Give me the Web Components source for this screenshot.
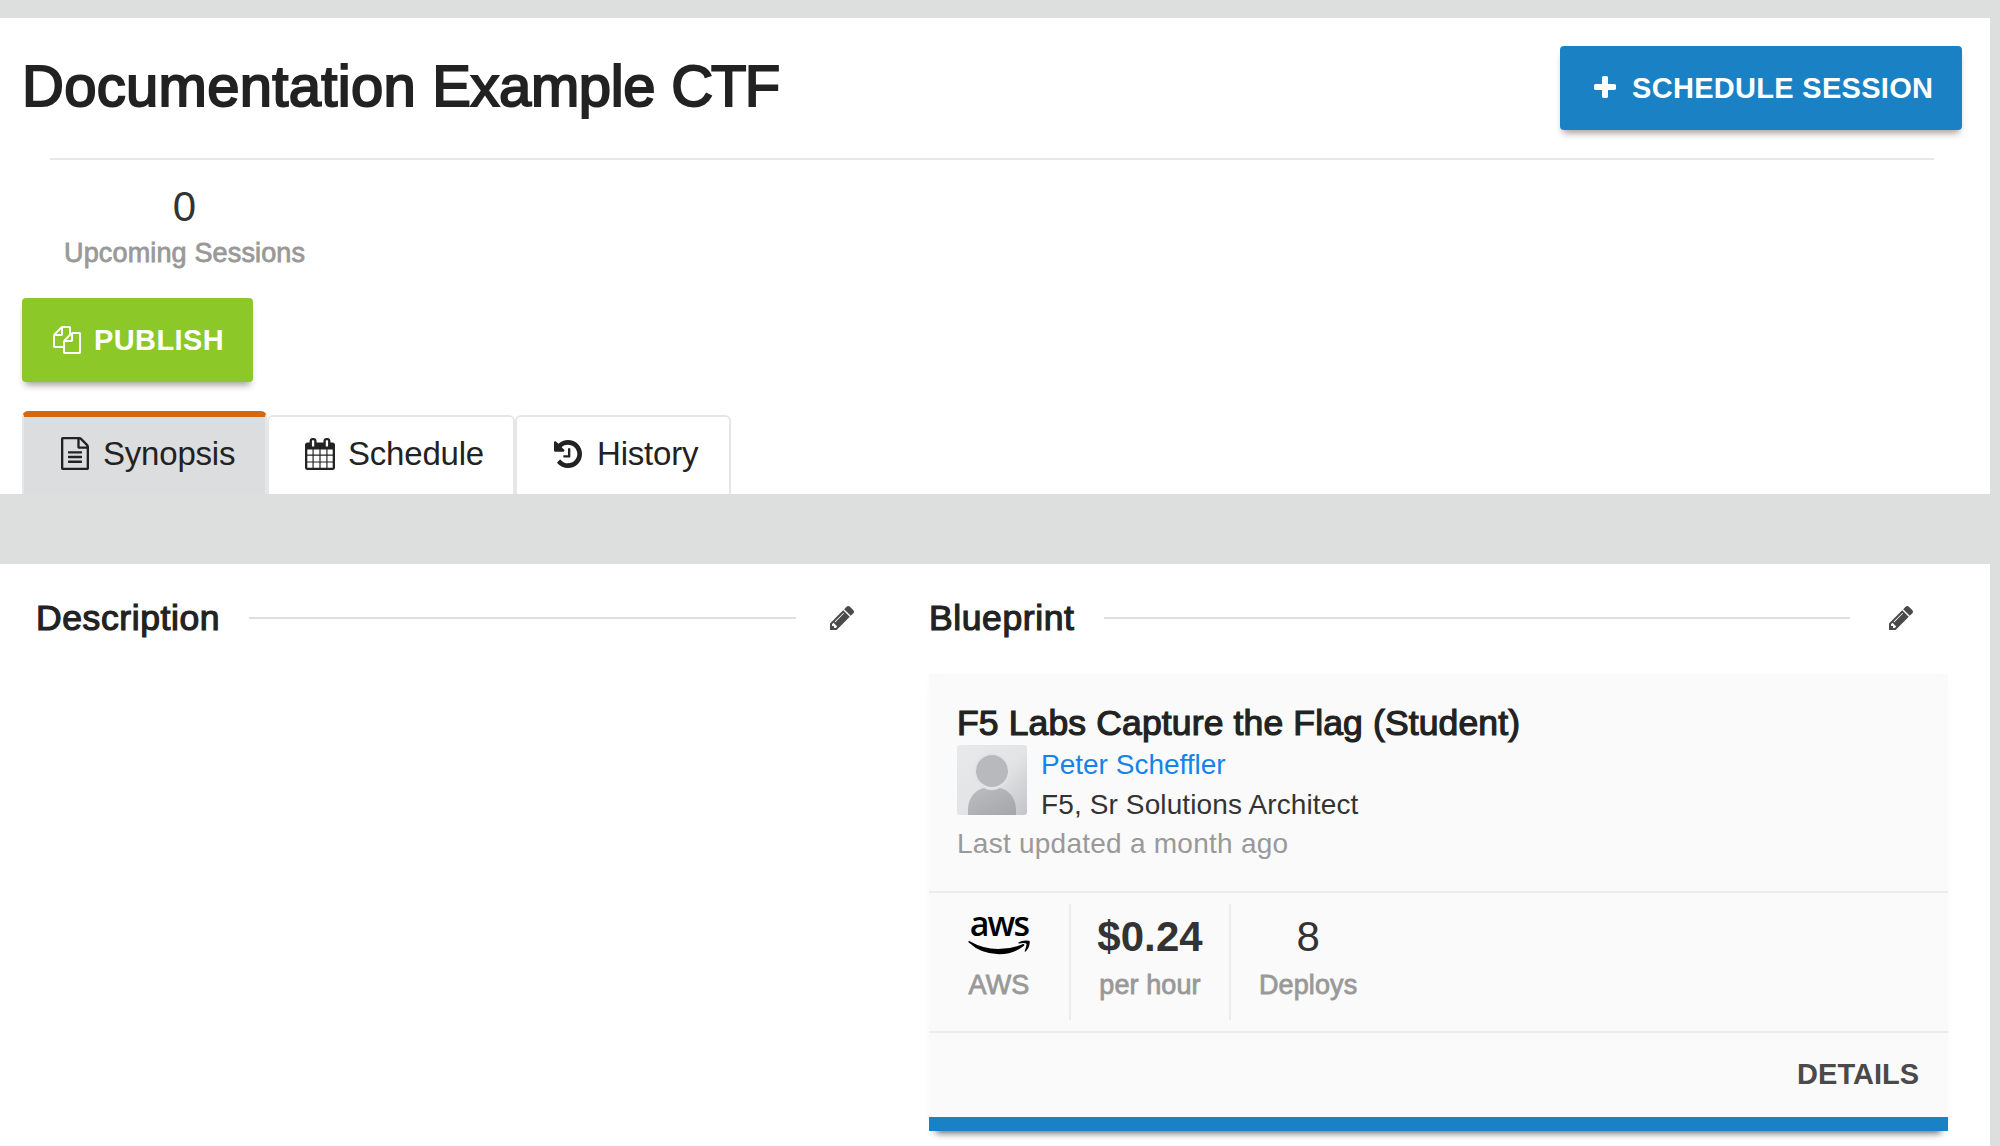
<!DOCTYPE html>
<html lang="en">
<head>
<meta charset="utf-8">
<title>Documentation Example CTF</title>
<style>
html,body{margin:0;height:100%}
body{font-family:"Liberation Sans",Arial,sans-serif;color:#222;background:#dddfde;overflow:hidden}
</style>
</head>
<body>
<event-page></event-page>
<script>
const ICONS = {
  plus: ['192 128 1408 1408', 'M1600 736v192q0 40-28 68t-68 28h-416v416q0 40-28 68t-68 28h-192q-40 0-68-28t-28-68v-416h-416q-40 0-68-28t-28-68v-192q0-40 28-68t68-28h416v-416q0-40 28-68t68-28h192q40 0 68 28t28 68v416h416q40 0 68 28t28 68z'],
  copy: ['0 0 1792 1792', 'M1696 384q40 0 68 28t28 68v1216q0 40-28 68t-68 28h-960q-40 0-68-28t-28-68v-288h-544q-40 0-68-28t-28-68v-672q0-40 20-88t48-76l408-408q28-28 76-48t88-20h416q40 0 68 28t28 68v328q68-40 128-40h416zm-544 213l-299 299h299v-299zm-640-384l-299 299h299v-299zm196 647l316-316v-416h-384v416q0 40-28 68t-68 28h-416v640h512v-256q0-40 20-88t48-76zm956 804v-1152h-384v416q0 40-28 68t-68 28h-416v640h896z'],
  file: ['128 0 1536 1792', 'M1596 380q28 28 48 76t20 88v1152q0 40-28 68t-68 28h-1344q-40 0-68-28t-28-68v-1600q0-40 28-68t68-28h896q40 0 88 20t76 48zm-444-244v376h376q-10-29-22-41l-313-313q-12-12-41-22zm384 1528v-1024h-416q-40 0-68-28t-28-68v-416h-768v1536h1280zm-1024-864q0-14 9-23t23-9h704q14 0 23 9t9 23v64q0 14-9 23t-23 9h-704q-14 0-23-9t-9-23v-64zm736 224q14 0 23 9t9 23v64q0 14-9 23t-23 9h-704q-14 0-23-9t-9-23v-64q0-14 9-23t23-9h704zm0 256q14 0 23 9t9 23v64q0 14-9 23t-23 9h-704q-14 0-23-9t-9-23v-64q0-14 9-23t23-9h704z'],
  calendar: ['64 0 1664 1792', 'M192 1664h288v-288h-288v288zm352 0h320v-288h-320v288zm-352-352h288v-320h-288v320zm352 0h320v-320h-320v320zm-352-384h288v-288h-288v288zm736 736h320v-288h-320v288zm-384-736h320v-288h-320v288zm768 736h288v-288h-288v288zm-384-352h320v-320h-320v320zm-352-864v-288q0-13-9.5-22.5t-22.5-9.5h-64q-13 0-22.5 9.5t-9.5 22.5v288q0 13 9.5 22.5t22.5 9.5h64q13 0 22.5-9.5t9.5-22.5zm736 864h288v-320h-288v320zm-384-384h320v-288h-320v288zm384 0h288v-288h-288v288zm32-480v-288q0-13-9.5-22.5t-22.5-9.5h-64q-13 0-22.5 9.5t-9.5 22.5v288q0 13 9.5 22.5t22.5 9.5h64q13 0 22.5-9.5t9.5-22.5zm384-64v1280q0 52-38 90t-90 38h-1408q-52 0-90-38t-38-90v-1280q0-52 38-90t90-38h128v-96q0-66 47-113t113-47h64q66 0 113 47t47 113v96h384v-96q0-66 47-113t113-47h64q66 0 113 47t47 113v96h128q52 0 90 38t38 90z'],
  history: ['128 128 1536 1536', 'M1664 896q0 156-61 298t-164 245-245 164-298 61q-172 0-327-72.5t-264-204.5q-7-10-6.5-22.5t8.5-20.5l137-138q10-9 25-9 16 2 23 12 73 95 179 147t225 52q104 0 198.5-40.5t163.5-109.5 109.5-163.5 40.5-198.5-40.5-198.5-109.5-163.5-163.5-109.5-198.5-40.5q-98 0-188 35.5t-160 101.5l137 138q31 30 14 69-17 40-59 40h-448q-26 0-45-19t-19-45v-448q0-42 40-59 39-17 69 14l130 129q107-101 244.5-156.5t284.5-55.5q156 0 298 61t245 164 164 245 61 298zm-640-288v448q0 14-9 23t-23 9h-320q-14 0-23-9t-9-23v-64q0-14 9-23t23-9h224v-352q0-14 9-23t23-9h64q14 0 23 9t9 23z'],
  pencil: ['128 149 1515 1515', 'M491 1536l91-91-235-235-91 91v107h128v128h107zm523-928q0-22-22-22-10 0-17 7l-542 542q-7 7-7 17 0 22 22 22 10 0 17-7l542-542q7-7 7-17zm-54-192l416 416-832 832h-416v-416zm683 96q0 53-37 90l-166 166-416-416 166-165q36-38 90-38 53 0 91 38l235 234q37 39 37 91z']
};

function define(name, html) {
  customElements.define(name, class extends HTMLElement {
    constructor() {
      super();
      const t = document.createElement('template');
      t.innerHTML = html;
      this.attachShadow({ mode: 'open' }).append(t.content.cloneNode(true));
    }
  });
}

customElements.define('ui-icon', class extends HTMLElement {
  connectedCallback() {
    if (this.shadowRoot) return;
    const [box, d] = ICONS[this.getAttribute('name')];
    this.attachShadow({ mode: 'open' }).innerHTML =
      `<style>:host{display:block;flex:none}svg{display:block;width:100%;height:100%}</style>
       <svg viewBox="${box}" preserveAspectRatio="none" fill="currentColor" aria-hidden="true"><path d="${d}"/></svg>`;
  }
});

define('ui-button', `<style>
:host{display:flex;box-sizing:border-box;height:84px;align-items:center;border-radius:4px;color:#fff;
background:var(--bg);box-shadow:0 6px 7px -3px rgba(40,20,20,.42);font-size:29px;font-weight:700;line-height:84px;white-space:nowrap}
</style><slot name="icon"></slot><span><slot></slot></span>`);

define('ui-stat', `<style>
:host{display:flex;flex-direction:column;align-items:center;box-sizing:border-box;white-space:nowrap}
.v{height:50px;line-height:50px;font-size:42px;color:#333}
.l{margin-top:var(--gap,4px);height:34px;line-height:34px;font-size:27px;color:#999;-webkit-text-stroke:.8px #999}
</style><div class="v"><slot name="value"></slot></div><div class="l"><slot></slot></div>`);

define('ui-tab', `<style>
:host{display:flex;box-sizing:border-box;height:79px;align-items:center;border:2px solid #e6e6e6;border-bottom:0;
border-radius:6px 6px 0 0;padding:0 0 4px 0;font-size:33px;line-height:40px;letter-spacing:-.2px;background:#fff;white-space:nowrap}
:host([active]){height:83px;background:#dcddde;border-top:6px solid #d4680f;padding-bottom:4px}
</style><slot name="icon"></slot><span><slot></slot></span>`);

define('section-heading', `<style>
:host{display:flex;align-items:center;height:44px;font-size:35.5px;line-height:44px;white-space:nowrap}
.t{flex:none;width:var(--title-width);letter-spacing:.6px;-webkit-text-stroke:1.2px #222}
.r{flex:1;height:2px;background:#dddfde}
ui-icon{margin-left:var(--icon-gap);width:24px;height:24px;color:#4a4a4a}
</style><span class="t"><slot></slot></span><span class="r"></span><ui-icon name="pencil"></ui-icon>`);

define('user-avatar', `<style>:host{display:block;width:70px;height:70px}svg{display:block}</style>
<svg width="70" height="70" viewBox="0 0 70 70"><defs>
<linearGradient id="b" x1="0" y1="0" x2="1" y2="1"><stop offset="0" stop-color="#e8e9ea"/><stop offset=".52" stop-color="#e3e4e5"/><stop offset="1" stop-color="#c3c4c7"/></linearGradient>
<linearGradient id="p" x1="0" y1="0" x2="1" y2="1"><stop offset="0" stop-color="#bcbdbf"/><stop offset="1" stop-color="#a5a6a9"/></linearGradient>
<clipPath id="c"><rect width="70" height="70" rx="3"/></clipPath></defs>
<g clip-path="url(#c)"><rect width="70" height="70" fill="url(#b)"/>
<path d="M11 70V65C11 53 18 45 27 43Q35 47.500 43 43C52 45 59 53 59 65V70Z" fill="url(#p)"/>
<circle cx="35" cy="26" r="18" fill="#e2e3e4"/><circle cx="35" cy="26" r="16" fill="#b8b9bc"/></g></svg>`);

define('aws-logo', `<style>
:host{display:flex;flex-direction:column;align-items:center;width:62px;height:54px;margin-top:-4px;color:#000}
span{font:600 34px/30px "Open Sans",sans-serif;letter-spacing:-1.8px;height:32px}
svg{display:block;flex:none}
</style><span>aws</span>
<svg width="62" height="15" viewBox="0 0 62 15"><path d="M.4 1.500Q.8.600 1.800 1.300Q15 9 30 9Q43 9 54.500 4.200C56 3.600 57 5 55.700 6Q45 14.200 31 14.200Q13 14.200 .8 2.600Q.2 2 .4 1.500Z"/><path d="M50.500 2.600Q54.500-.2 60.800.7Q62 .9 61.800 2.600Q61.200 8.500 57.500 11.600Q56.500 12.200 56.700 11Q58.800 5.600 58.500 3.700Q57 2.500 51 3.400Q49.700 3.400 50.500 2.600Z"/></svg>`);

define('event-header', `<style>
:host{display:flex;flex-direction:column;box-sizing:border-box;height:476px;background:#fff;padding:28px 28px 0 22px}
.top{display:flex;justify-content:space-between;height:84px}
h1{margin:0;font-size:58px;line-height:79px;font-weight:400;-webkit-text-stroke:2px #222;white-space:nowrap}
.w1{letter-spacing:.3px}.w2{letter-spacing:-.4px}.w3{letter-spacing:-1.9px}
.sched{--bg:#1a82c4;width:402px;padding-left:34px;letter-spacing:.3px}
.sched ui-icon{width:22px;height:22px;margin:-2px 16px 0 0}
hr{border:0;height:2px;background:#e8e8e8;margin:28px 28px 0;width:1884px;flex:none}
.stats{display:flex;margin:22px 0 28px 42px}
.stats ui-stat{letter-spacing:.15px}
.pub{--bg:#8cc928;width:231px;padding-left:31px;letter-spacing:.4px}
.pub ui-icon{width:28px;height:28px;margin-right:13px}
.tabs{display:flex;align-items:flex-end;margin-top:29px}
.t1{width:245px;padding-left:37px}.t2{width:248px;padding-left:36px}.t3{width:216px;padding-left:37px}
.t1 ui-icon{width:28px;height:33px;margin-right:14px}
.t2 ui-icon{width:30px;height:32px;margin-right:13px}
.t3 ui-icon{width:28px;height:28px;margin-right:15px}
</style>
<div class="top"><h1><span class="w1">Documentation</span> <span class="w2">Example</span> <span class="w3">CTF</span></h1>
<ui-button class="sched"><ui-icon slot="icon" name="plus"></ui-icon>SCHEDULE SESSION</ui-button></div>
<hr>
<div class="stats"><ui-stat><span slot="value">0</span>Upcoming Sessions</ui-stat></div>
<ui-button class="pub"><ui-icon slot="icon" name="copy"></ui-icon>PUBLISH</ui-button>
<div class="tabs">
<ui-tab class="t1" active><ui-icon slot="icon" name="file"></ui-icon>Synopsis</ui-tab>
<ui-tab class="t2"><ui-icon slot="icon" name="calendar"></ui-icon>Schedule</ui-tab>
<ui-tab class="t3"><ui-icon slot="icon" name="history"></ui-icon>History</ui-tab>
</div>`);

define('blueprint-card', `<style>
:host{display:flex;flex-direction:column;box-sizing:border-box;height:457px;width:1019px;background:#fafafa;border-bottom:14px solid #1a82c4;box-shadow:0 9px 7px -7px rgba(0,0,0,.6),0 2px 10px rgba(0,0,0,.015)}
.info{height:217px;padding:27px 28px 0;box-sizing:border-box}
h2{margin:0;font-size:35.5px;line-height:44px;height:44px;font-weight:400;letter-spacing:.14px;-webkit-text-stroke:1.2px #222;white-space:nowrap}
.by{display:flex;gap:14px;height:74px;font-size:28px;line-height:40px;color:#333}
.by a{display:block;color:#1583e9}
.role{letter-spacing:.12px}
.upd{font-size:28px;line-height:40px;color:#999;letter-spacing:.25px;margin-top:5px}
.stats{display:flex;height:142px;box-sizing:border-box;border:solid #ececec;border-width:2px 0;padding:11px 0}
.stats ui-stat{height:116px;--gap:6px;padding-top:8px;padding-left:28px;padding-right:28px;letter-spacing:.1px}
.stats ui-stat+ui-stat{border-left:2px solid #ececec}
.a{width:140px}.b{width:160px}
.foot{display:flex;justify-content:flex-end;padding-right:29px;font-size:29px;line-height:83px;font-weight:700;color:#4a4a4a}
</style>
<div class="info"><h2>F5 Labs Capture the Flag (Student)</h2>
<div class="by"><user-avatar></user-avatar><div><a>Peter Scheffler</a><div class="role">F5, Sr Solutions Architect</div></div></div>
<div class="upd">Last updated a month ago</div></div>
<div class="stats"><ui-stat class="a"><aws-logo slot="value"></aws-logo>AWS</ui-stat><ui-stat class="b"><b slot="value">$0.24</b>per hour</ui-stat><ui-stat><span slot="value">8</span>Deploys</ui-stat></div>
<div class="foot">DETAILS</div>`);

define('event-page', `<style>
:host{display:flex;flex-direction:column;box-sizing:border-box;height:1146px;padding:18px 10px 0 0;gap:70px}
main{flex:1;background:#fff;display:flex;padding:32px 42px 0 35px;align-items:flex-start}
.l{width:820px;--icon-gap:34px;--title-width:213px}
.l section-heading{width:818px;margin-left:1px}
.r{margin-left:74px;width:1019px;--icon-gap:39px;--title-width:175px}
.r section-heading{width:984px;margin-bottom:34px}
</style>
<event-header></event-header>
<main><section class="l"><section-heading>Description</section-heading></section>
<section class="r"><section-heading>Blueprint</section-heading><blueprint-card></blueprint-card></section></main>`);
</script>
</body>
</html>
